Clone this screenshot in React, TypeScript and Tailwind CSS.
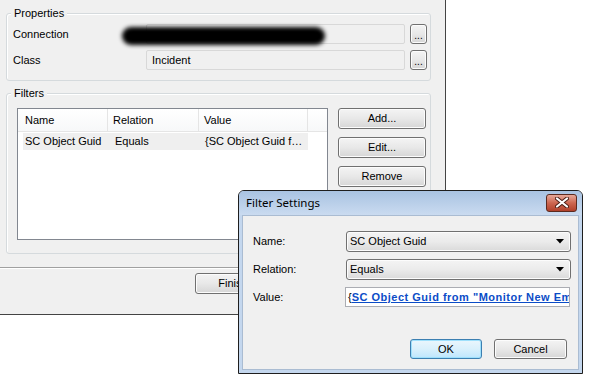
const btn =
  "flex items-center justify-center border border-[#707070] rounded-[3px] bg-gradient-to-b from-[#f4f4f4] via-[#e8e8e8] to-[#d6d6d6] shadow-[inset_0_0_0_1px_#fcfcfc] text-black";

const GroupBox = ({ title, className, children }: { title: string; className: string; children: React.ReactNode }) => (
  <div className={"relative border border-[#d5dadd] rounded-[3px] shadow-[inset_1px_1px_0_#ffffff] " + className}>
    <span className="absolute -top-[8px] left-[4px] px-[3px] bg-[#f0f0f0] leading-[14px]">{title}</span>
    {children}
  </div>
);

const ReadonlyBox = ({ text }: { text?: string }) => (
  <div className="w-[259px] shrink-0 h-[20px] border border-[#d8d8d8] rounded-[2px] bg-[#f0f0f0] pl-[5px] flex items-center">
    {text}
  </div>
);

const DotsButton = () => (
  <div className={btn + " w-[17px] h-[20px] items-end pb-[3px] text-[10px] leading-[8px]"}>...</div>
);

const Combo = ({ text }: { text: string }) => (
  <div className="w-[225px] h-[21px] border border-[#707070] rounded-[3px] bg-gradient-to-b from-[#f4f4f4] via-[#ebebeb] to-[#dadada] shadow-[inset_0_0_0_1px_#fcfcfc] flex items-center pl-[3px] pr-[6px]">
    <span className="flex-1">{text}</span>
    <svg width="8" height="5" viewBox="0 0 8 5">
      <path d="M0 0h8L4 4.5z" fill="#000" />
    </svg>
  </div>
);

export default function App() {
  return (
    <div className="relative w-[591px] h-[384px] bg-white overflow-hidden text-[11px] text-black font-['Liberation_Sans',Arial,sans-serif]">
      {/* main window */}
      <div className="w-[446px] h-[315px] bg-[#f0f0f0] border-r border-b border-[#444] flex flex-col">
        <div className="px-[6px] pt-[13px] w-[437px] flex flex-col gap-[12px]">
          <GroupBox title="Properties" className="h-[68px] pt-[10px] pl-[6px] flex flex-col gap-[6px]">
            <div className="flex items-center">
              <span className="w-[133px] shrink-0">Connection</span>
              <ReadonlyBox />
              <div className="ml-[5px]"><DotsButton /></div>
            </div>
            <div className="flex items-center">
              <span className="w-[133px] shrink-0">Class</span>
              <ReadonlyBox text="Incident" />
              <div className="ml-[5px]"><DotsButton /></div>
            </div>
          </GroupBox>

          <GroupBox title="Filters" className="h-[161px] pt-[14px] pl-[10px] flex gap-[10px]">
            <div className="w-[311px] shrink-0 h-[132px] border border-[#828790] bg-white flex flex-col">
              <div className="h-[23px] flex border-b border-[#e5e5e5] bg-gradient-to-b from-white to-[#f7f8f9]">
                <div className="w-[90px] pl-[7px] flex items-center border-r border-[#e5e5e5]">Name</div>
                <div className="w-[91px] pl-[5px] flex items-center border-r border-[#e5e5e5]">Relation</div>
                <div className="w-[109px] pl-[5px] flex items-center border-r border-[#e5e5e5]">Value</div>
              </div>
              <div className="mt-[1px] ml-[5px] w-[285px] h-[17px] bg-[#efefef] flex items-center">
                <span className="w-[86px] pl-[2px]">SC Object Guid</span>
                <span className="w-[91px] pl-[6px]">Equals</span>
                <span className="pl-[5px]">{"{SC Object Guid f\u2026"}</span>
              </div>
            </div>
            <div className="flex flex-col gap-[8px]">
              <div className={btn + " w-[88px] h-[21px]"}>Add...</div>
              <div className={btn + " w-[88px] h-[21px]"}>Edit...</div>
              <div className={btn + " w-[88px] h-[21px]"}>Remove</div>
            </div>
          </GroupBox>
        </div>

        <div className="mt-[13px] border-t border-[#a0a0a0] shadow-[inset_0_1px_0_#ffffff] flex-1 pt-[5px] pl-[195px]">
          <div className={btn + " w-[76px] h-[21px]"}>Finish</div>
        </div>
      </div>

      {/* Filter Settings dialog */}
      <div className="absolute left-[238px] top-[190px] w-[345px] h-[184px] border border-[#1e1e1e] rounded-t-[6px] bg-[#c4d7ee] flex flex-col overflow-hidden">
        <div className="h-[24px] flex items-center pl-[7px] pr-[5px] bg-gradient-to-b from-[#a9c3e2] to-[#cadbf0]">
          <span className="flex-1 text-[11.5px] font-['Noto_Sans',sans-serif] text-black">Filter Settings</span>
          <div className="w-[31px] h-[18px] mb-[1px] rounded-[3px] border border-[#5b2a1f] bg-gradient-to-b from-[#e6a899] via-[#cd6650] to-[#b0402a] flex items-center justify-center">
            <svg width="14" height="11" viewBox="0 0 14 11">
              <path d="M2 1.5L12 9.5M12 1.5L2 9.5" stroke="#4a1d14" strokeWidth="4" strokeLinecap="round" />
              <path d="M2 1.5L12 9.5M12 1.5L2 9.5" stroke="#fff" strokeWidth="2.2" strokeLinecap="round" />
            </svg>
          </div>
        </div>
        <div className="mx-[3px] mb-[3px] flex-1 bg-[#f0f0f0] border border-[#aabcd2] pt-[15px] pl-[10px] flex flex-col">
          <div className="flex items-center">
            <span className="w-[93px]">Name:</span>
            <Combo text="SC Object Guid" />
          </div>
          <div className="flex items-center mt-[7px]">
            <span className="w-[93px]">Relation:</span>
            <Combo text="Equals" />
          </div>
          <div className="flex items-center mt-[7px]">
            <span className="w-[92px]">Value:</span>
            <div className="w-[225px] h-[20px] border border-[#abadb3] bg-white pl-[2px] flex items-center whitespace-nowrap overflow-hidden">
              <span>{"{"}</span>
              <span className="font-bold underline tracking-[0.5px] text-[#0b4cc7]">SC Object Guid from "Monitor New Email"</span>
            </div>
          </div>
          <div className="flex gap-[12px] mt-[32px] pl-[157px]">
            <div className="w-[72px] h-[20px] flex items-center justify-center rounded-[3px] border border-[#3c7fb1] bg-gradient-to-b from-[#eaf6fd] via-[#d9f0fc] to-[#bee6fd] shadow-[inset_0_0_0_1px_#9ee0fc]">OK</div>
            <div className={btn + " w-[73px] h-[20px]"}>Cancel</div>
          </div>
        </div>
      </div>

      {/* redaction over the connection field */}
      <div className="absolute left-[122px] top-[27px] w-[203px] h-[18px] rounded-full bg-black blur-[2px]" />
    </div>
  );
}
